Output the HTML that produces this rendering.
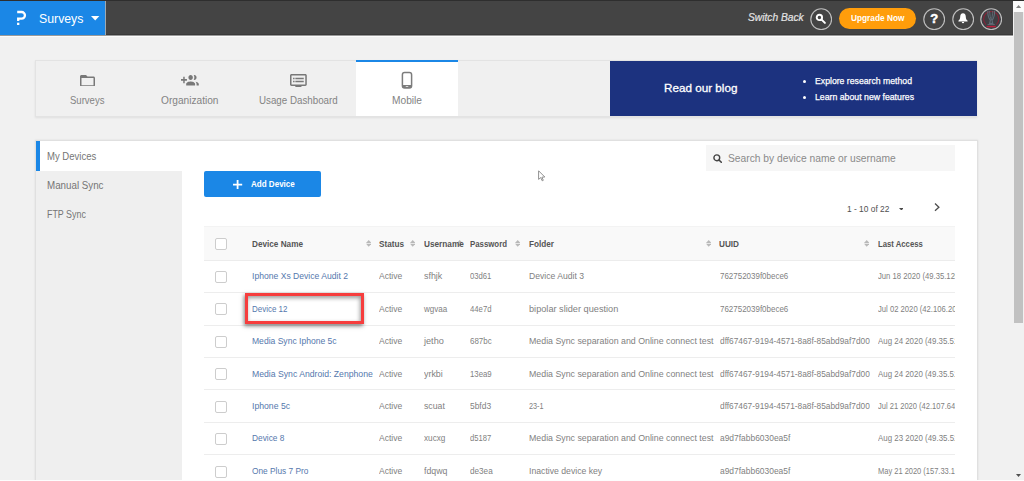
<!DOCTYPE html>
<html lang="en">
<head>
<meta charset="utf-8">
<title>Mobile - My Devices</title>
<style>
*{box-sizing:border-box;margin:0;padding:0}
html,body{width:1024px;height:481px;overflow:hidden}
body{position:relative;background:#f1f1f1;font-family:"Liberation Sans",sans-serif;}
.abs,.t,svg.i{position:absolute}
.t{white-space:nowrap;line-height:1;transform-origin:0 0;display:block}
#topline{left:0;top:0;width:1024px;height:1px;background:#2e2e2e}
#hdr{left:0;top:1px;width:1013px;height:34px;background:#444;border-bottom:1px solid #3a3a3a}
#hdrl1{left:0;top:35px;width:1013px;height:1px;background:#9a9a9a}
#hdrl2{left:0;top:36px;width:1013px;height:1px;background:#fcfcfc}
#brand{left:0;top:1px;width:106px;height:34px;background:#1b87e6;border-right:1px solid #9fa8b0}
.circ{width:22px;height:22px;border:1px solid #cfcfcf;border-radius:50%;top:8px}
#upg{left:839px;top:8px;width:77px;height:21px;border-radius:10.5px;background:#ff9d0b}
#sbar{left:1013px;top:1px;width:11px;height:480px;background:#f1f1f1}
#sthumb{left:1014px;top:12px;width:9px;height:310.5px;background:#c1c1c1}
#sbtn{left:1013px;top:1px;width:11px;height:11px;background:#fbfbfb}
#tabs{left:35px;top:60px;width:942px;height:57px;background:#f0f0f0;border:1px solid #e3e3e3;box-shadow:0 1px 2px rgba(0,0,0,.08)}
#tabact{left:356px;top:60px;width:102px;height:56px;background:#fff;border-top:2px solid #1b87e6}
#blog{left:610px;top:61px;width:366.6px;height:54.6px;background:#1c327f}
.dot{width:3.4px;height:3.4px;border-radius:50%;background:#fff}
#card{left:36px;top:141px;width:941px;height:345px;background:#fff;box-shadow:0 0 0 1px #e0e0e0,0 0 2px 1px rgba(0,0,0,.09)}
#botline{left:0;top:480px;width:1024px;height:1px;background:#fdfdfd}
#side{left:36px;top:171px;width:146px;height:311px;background:#efefef}
#sideact{left:36px;top:141px;width:4px;height:30px;background:#1b87e6}
#addbtn{left:204.2px;top:170.7px;width:116.8px;height:26.3px;border-radius:2px;background:#1b87e6}
#search{left:706px;top:145px;width:249px;height:26px;background:#f6f6f6}
#thead{left:204.2px;top:226px;width:750.6px;height:35px;background:#f9f9f9;border-bottom:1px solid #ececec;border-top:1px solid #f3f3f3}
.rl{left:204.2px;width:750.6px;height:1px;background:#ededed}
.cb{left:215.2px;width:12px;height:12px;border:1px solid #cdcdcd;border-radius:2px;background:#fff}
#clip{left:204px;top:261px;width:750.8px;height:220px;overflow:hidden}
#hl{left:245px;top:293px;width:119px;height:31px;border:3px solid #f63d3d;box-shadow:-1px 2px 4px rgba(0,0,0,.5),inset -1px 2px 4px rgba(0,0,0,.4)}
</style>
</head>
<body>
<div class="abs" id="hdr"></div>
<div class="abs" id="brand"></div>
<div class="abs" id="hdrl1"></div><div class="abs" id="hdrl2"></div>
<div class="abs" id="topline"></div>
<!-- logo -->
<svg class="i" style="left:16px;top:10px" width="11" height="16" viewBox="0 0 11 16"><path d="M1.2 2 H5.6 A3.3 3.3 0 0 1 5.6 8.7 H2.2 V11" fill="none" stroke="#fff" stroke-width="2.3" stroke-linejoin="miter"/><rect x="1.05" y="12.7" width="2.3" height="2.3" fill="#fff"/></svg>
<svg class="i" style="left:91.2px;top:16.2px" width="8.4" height="4.6" viewBox="0 0 8.4 4.6"><path d="M0 0H8.4L4.2 4.6Z" fill="#fff"/></svg>
<!-- header right icons -->
<svg class="i" style="left:809.7px;top:7.75px" width="22.4" height="22.4" viewBox="0 0 22.4 22.4"><circle cx="11.2" cy="11.2" r="10.4" fill="none" stroke="#bebebe" stroke-width="1.15"/></svg>
<svg class="i" style="left:815px;top:13px" width="12" height="12" viewBox="0 0 12 12"><circle cx="4.4" cy="4.4" r="2.7" fill="none" stroke="#fff" stroke-width="1.9"/><path d="M6.6 6.6L9.9 9.9" stroke="#fff" stroke-width="2" stroke-linecap="round"/></svg>
<div class="abs" id="upg"></div>
<svg class="i" style="left:922.7px;top:7.75px" width="22.4" height="22.4" viewBox="0 0 22.4 22.4"><circle cx="11.2" cy="11.2" r="10.4" fill="none" stroke="#bebebe" stroke-width="1.15"/></svg>
<span class="t" style="left:930.2px;top:12px;font-size:13px;font-weight:700;color:#fff;-webkit-text-stroke:0.5px #fff">?</span>
<svg class="i" style="left:951.5px;top:7.75px" width="22.4" height="22.4" viewBox="0 0 22.4 22.4"><circle cx="11.2" cy="11.2" r="10.4" fill="none" stroke="#bebebe" stroke-width="1.15"/></svg>
<svg class="i" style="left:957.7px;top:13.2px" width="10" height="11" viewBox="0 0 10 11"><path d="M5 0.3C6.9 0.3 7.8 1.9 7.8 3.8C7.8 5.8 8.5 6.9 9.6 7.8V8.6H0.4V7.8C1.5 6.9 2.2 5.8 2.2 3.8C2.2 1.9 3.1 0.3 5 0.3Z" fill="#fff"/><path d="M3.8 9.1H6.2A1.2 1.2 0 0 1 3.8 9.1Z" fill="#fff"/></svg>
<!-- avatar -->
<svg class="i" style="left:980.1px;top:7.75px" width="22.4" height="22.4" viewBox="0 0 22.4 22.4"><circle cx="11.2" cy="11.2" r="10.4" fill="#3e3e43" stroke="#bebebe" stroke-width="1.15"/><path d="M6 16.6A7.6 7.6 0 1 1 16.4 16.6" fill="none" stroke="#8a2236" stroke-width="1.1"/><path d="M7.9 2.6C7.6 7 8.9 10.6 10.4 12.4L9.6 15.4H12.8L12 12.4C13.5 10.6 14.8 7 14.5 2.6" fill="none" stroke="#5f6b76" stroke-width="1.1"/><path d="M9.6 3C9.8 7 10.4 10 11.2 12C12 10 12.6 7 12.8 3" fill="none" stroke="#5f6b76" stroke-width="0.9"/><path d="M7.6 16.6H14.8" stroke="#5f6b76" stroke-width="1"/><path d="M6.6 18.6H15.8" stroke="#c01f3c" stroke-width="1.4"/></svg>
<!-- scrollbar -->
<div class="abs" id="sbar"></div>
<div class="abs" id="sbtn"></div>
<div class="abs" id="sthumb"></div>
<svg class="i" style="left:1015.8px;top:5.2px" width="5.2" height="2.9" viewBox="0 0 5.2 2.9"><path d="M0 2.9L2.6 0L5.2 2.9Z" fill="#808080"/></svg>
<svg class="i" style="left:1016px;top:473.5px" width="5" height="3" viewBox="0 0 5 3"><path d="M0 0H5L2.5 3Z" fill="#505050"/></svg>
<!-- tabs -->
<div class="abs" id="tabs"></div>
<div class="abs" id="tabact"></div>
<svg class="i" style="left:79.5px;top:74.5px" width="15" height="11.8" viewBox="2 4 20 16" preserveAspectRatio="none"><path fill="#787878" d="M20 6h-8l-2-2H4c-1.1 0-1.99.9-1.99 2L2 18c0 1.1.9 2 2 2h16c1.1 0 2-.9 2-2V8c0-1.1-.9-2-2-2zm0 12H4V8h16v10z"/></svg>
<svg class="i" style="left:181px;top:75px" width="17.8" height="10.6" viewBox="0 5 24 13" preserveAspectRatio="none"><path fill="#787878" d="M8 10H5V7H3v3H0v2h3v3h2v-3h3v-2zm10 1c1.66 0 2.99-1.34 2.99-3S19.66 5 18 5c-.32 0-.63.05-.91.14.57.81.9 1.79.9 2.86s-.34 2.04-.9 2.86c.28.09.59.14.91.14zm-5 0c1.66 0 2.99-1.34 2.99-3S14.66 5 13 5c-1.66 0-3 1.34-3 3s1.34 3 3 3zm6.620 2.160c.83.73 1.380 1.660 1.380 2.840v2h3v-2c0-1.540-2.370-2.490-4.380-2.840zM13 13c-2 0-6 1-6 3v2h12v-2c0-2-4-3-6-3z"/></svg>
<svg class="i" style="left:290px;top:73.7px" width="16.8" height="13.4" viewBox="1 3 22 18" preserveAspectRatio="none"><path fill="#787878" d="M21 3H3c-1.1 0-2 .9-2 2v12c0 1.1.9 2 2 2h5v2h8v-2h5c1.1 0 1.990-.9 1.990-2L23 5c0-1.1-.9-2-2-2zm0 14H3V5h18v12zm-2-9H8v2h11V8zm0 4H8v2h11v-2zM7 8H5v2h2V8zm0 4H5v2h2v-2z"/></svg>
<svg class="i" style="left:401px;top:71px;overflow:visible" width="12" height="18" viewBox="0 0 12 18"><rect x="1.4" y="1.5" width="9.2" height="15.4" rx="2.2" fill="none" stroke="#7c7c7c" stroke-width="1.5"/><path d="M1.4 14H10.6V15.2Q10.6 16.9 8.6 16.9H3.4Q1.4 16.9 1.4 15.2Z" fill="#7c7c7c"/><rect x="4.65" y="14.9" width="2.7" height="1" rx="0.5" fill="#d8d8d8"/></svg>
<!-- blog -->
<div class="abs" id="blog"></div>
<div class="abs dot" style="left:802.9px;top:79.5px"></div>
<div class="abs dot" style="left:802.9px;top:95.5px"></div>
<!-- card -->
<div class="abs" id="card"></div>
<div class="abs" id="side"></div>
<div class="abs" id="sideact"></div>
<div class="abs" id="addbtn"></div>
<svg class="i" style="left:233.4px;top:180px" width="9.2" height="9.2" viewBox="0 0 9.2 9.2"><path d="M4.6 0V9.2M0 4.6H9.2" stroke="#fff" stroke-width="1.8"/></svg>
<div class="abs" id="search"></div>
<svg class="i" style="left:712.8px;top:153.8px" width="9" height="9" viewBox="0 0 9 9"><circle cx="3.8" cy="3.8" r="2.9" fill="none" stroke="#444" stroke-width="1.4"/><path d="M6.0 6.0L8.3 8.3" stroke="#444" stroke-width="1.6" stroke-linecap="round"/></svg>
<svg class="i" style="left:898.6px;top:207.6px" width="4.8" height="2.6" viewBox="0 0 4.8 2.6"><path d="M0 0H4.800L2.4 2.6Z" fill="#4a4a4a"/></svg>
<svg class="i" style="left:934px;top:203.2px" width="6.4" height="8.4" viewBox="0 0 6.4 8.4"><path d="M1 0.6L4.900 4.200L1 7.800" fill="none" stroke="#4d4d4d" stroke-width="1.3"/></svg>
<!-- cursor -->
<svg class="i" style="left:538px;top:169.5px" width="8" height="12" viewBox="0 0 8 12"><path d="M0.6 0.8V9.4L2.7 7.6L4.2 10.8L5.3 10.3L3.9 7.2L6.8 7Z" fill="#fff" stroke="#858585" stroke-width="0.9" stroke-linejoin="round"/></svg>
<!-- table -->
<div class="abs" id="thead"></div>
<div class="abs cb" style="top:237.7px"></div>
<svg class="i" style="left:365.8px;top:239.8px" width="5.4" height="6.8" viewBox="0 0 5.4 6.8"><path d="M0 3L2.7 0L5.4 3Z" fill="#b9b9b9"/><path d="M0 3.8L2.7 6.8L5.4 3.8Z" fill="#b9b9b9"/></svg>
<svg class="i" style="left:409.9px;top:239.8px" width="5.4" height="6.8" viewBox="0 0 5.4 6.8"><path d="M0 3L2.7 0L5.4 3Z" fill="#b9b9b9"/><path d="M0 3.8L2.7 6.8L5.4 3.8Z" fill="#b9b9b9"/></svg>
<svg class="i" style="left:457.1px;top:239.8px" width="5.4" height="6.8" viewBox="0 0 5.4 6.8"><path d="M0 3L2.7 0L5.4 3Z" fill="#b9b9b9"/><path d="M0 3.8L2.7 6.8L5.4 3.8Z" fill="#b9b9b9"/></svg>
<svg class="i" style="left:514.8px;top:239.8px" width="5.4" height="6.8" viewBox="0 0 5.4 6.8"><path d="M0 3L2.7 0L5.4 3Z" fill="#b9b9b9"/><path d="M0 3.8L2.7 6.8L5.4 3.8Z" fill="#b9b9b9"/></svg>
<svg class="i" style="left:705.6px;top:239.8px" width="5.4" height="6.8" viewBox="0 0 5.4 6.8"><path d="M0 3L2.7 0L5.4 3Z" fill="#b9b9b9"/><path d="M0 3.8L2.7 6.8L5.4 3.8Z" fill="#b9b9b9"/></svg>
<svg class="i" style="left:863.9px;top:239.8px" width="5.4" height="6.8" viewBox="0 0 5.4 6.8"><path d="M0 3L2.7 0L5.4 3Z" fill="#b9b9b9"/><path d="M0 3.8L2.7 6.8L5.4 3.8Z" fill="#b9b9b9"/></svg>


<div class="abs rl" style="top:292px"></div>
<div class="abs rl" style="top:325px"></div>
<div class="abs rl" style="top:357px"></div>
<div class="abs rl" style="top:389px"></div>
<div class="abs rl" style="top:422px"></div>
<div class="abs rl" style="top:454px"></div>
<div class="abs rl" style="top:487px"></div>
<div class="abs cb" style="top:271.0px"></div>
<div class="abs cb" style="top:303.4px"></div>
<div class="abs cb" style="top:335.8px"></div>
<div class="abs cb" style="top:368.3px"></div>
<div class="abs cb" style="top:400.7px"></div>
<div class="abs cb" style="top:433.1px"></div>
<div class="abs cb" style="top:465.5px"></div>
<span class="t" style="left:39.4px;top:13px;font-size:12.7px;color:#fff;transform:scaleX(0.969);">Surveys</span>
<span class="t" style="left:748.1px;top:12px;font-size:11.4px;color:#e4e4e4;transform:scaleX(0.896);font-style:italic;-webkit-text-stroke:0.2px #e4e4e4;">Switch Back</span>
<span class="t" style="left:850.6px;top:13px;font-size:9.8px;color:#fff;transform:scaleX(0.846);font-weight:700;">Upgrade Now</span>
<span class="t" style="left:70.0px;top:95px;font-size:10.5px;color:#838383;transform:scaleX(0.909);">Surveys</span>
<span class="t" style="left:160.8px;top:95px;font-size:10.5px;color:#838383;transform:scaleX(0.966);">Organization</span>
<span class="t" style="left:258.8px;top:95px;font-size:10.5px;color:#838383;transform:scaleX(0.930);">Usage Dashboard</span>
<span class="t" style="left:392.0px;top:95px;font-size:10.5px;color:#838383;transform:scaleX(0.970);">Mobile</span>
<span class="t" style="left:664.4px;top:83px;font-size:11.5px;color:#fff;transform:scaleX(1.016);-webkit-text-stroke:0.3px #fff;">Read our blog</span>
<span class="t" style="left:814.5px;top:76px;font-size:9.5px;color:#fff;transform:scaleX(0.914);-webkit-text-stroke:0.25px #fff;">Explore research method</span>
<span class="t" style="left:814.5px;top:92px;font-size:9.5px;color:#fff;transform:scaleX(0.919);-webkit-text-stroke:0.25px #fff;">Learn about new features</span>
<span class="t" style="left:47.4px;top:151px;font-size:10.5px;color:#757575;transform:scaleX(0.907);">My Devices</span>
<span class="t" style="left:47.4px;top:180px;font-size:10.5px;color:#757575;transform:scaleX(0.931);">Manual Sync</span>
<span class="t" style="left:47.4px;top:209px;font-size:10.5px;color:#757575;transform:scaleX(0.847);">FTP Sync</span>
<span class="t" style="left:251.3px;top:179px;font-size:9.9px;color:#fff;transform:scaleX(0.814);font-weight:700;">Add Device</span>
<span class="t" style="left:727.5px;top:153px;font-size:11.3px;color:#8a8a8a;transform:scaleX(0.908);">Search by device name or username</span>
<span class="t" style="left:846.8px;top:204px;font-size:9.5px;color:#505050;transform:scaleX(0.882);">1 - 10 of 22</span>
<span class="t" style="left:251.7px;top:239px;font-size:9.5px;color:#555;transform:scaleX(0.862);font-weight:700;">Device Name</span>
<span class="t" style="left:379.0px;top:239px;font-size:9.5px;color:#555;transform:scaleX(0.861);font-weight:700;">Status</span>
<span class="t" style="left:423.5px;top:239px;font-size:9.5px;color:#555;transform:scaleX(0.866);font-weight:700;">Username</span>
<span class="t" style="left:470.0px;top:239px;font-size:9.5px;color:#555;transform:scaleX(0.824);font-weight:700;">Password</span>
<span class="t" style="left:528.7px;top:239px;font-size:9.5px;color:#555;transform:scaleX(0.861);font-weight:700;">Folder</span>
<span class="t" style="left:719.3px;top:239px;font-size:9.5px;color:#555;transform:scaleX(0.861);font-weight:700;">UUID</span>
<span class="t" style="left:878.1px;top:239px;font-size:9.5px;color:#555;transform:scaleX(0.813);font-weight:700;">Last Access</span>
<div class="abs" id="clip" style="left:0;top:0;width:954.8px;height:481px">
<span class="t" style="left:251.7px;top:271px;font-size:9.5px;color:#5578ad;transform:scaleX(0.904);">Iphone Xs Device Audit 2</span>
<span class="t" style="left:379.0px;top:271px;font-size:9.5px;color:#7f7f7f;transform:scaleX(0.900);">Active</span>
<span class="t" style="left:423.5px;top:271px;font-size:9.5px;color:#7f7f7f;transform:scaleX(0.936);">sfhjk</span>
<span class="t" style="left:470.0px;top:271px;font-size:9.5px;color:#7f7f7f;transform:scaleX(0.810);">03d61</span>
<span class="t" style="left:528.7px;top:271px;font-size:9.5px;color:#7f7f7f;transform:scaleX(0.906);">Device Audit 3</span>
<span class="t" style="left:719.6px;top:271px;font-size:9.5px;color:#7f7f7f;transform:scaleX(0.839);">762752039f0bece6</span>
<span class="t" style="left:877.8px;top:271px;font-size:9.5px;color:#7f7f7f;transform:scaleX(0.809);">Jun 18 2020 (49.35.120.11)</span>
<span class="t" style="left:251.7px;top:304px;font-size:9.5px;color:#5578ad;transform:scaleX(0.838);">Device 12</span>
<span class="t" style="left:379.0px;top:304px;font-size:9.5px;color:#7f7f7f;transform:scaleX(0.900);">Active</span>
<span class="t" style="left:423.5px;top:304px;font-size:9.5px;color:#7f7f7f;transform:scaleX(0.848);">wgvaa</span>
<span class="t" style="left:470.0px;top:304px;font-size:9.5px;color:#7f7f7f;transform:scaleX(0.814);">44e7d</span>
<span class="t" style="left:528.7px;top:304px;font-size:9.5px;color:#7f7f7f;transform:scaleX(0.966);">bipolar slider question</span>
<span class="t" style="left:719.6px;top:304px;font-size:9.5px;color:#7f7f7f;transform:scaleX(0.839);">762752039f0bece6</span>
<span class="t" style="left:877.8px;top:304px;font-size:9.5px;color:#7f7f7f;transform:scaleX(0.807);">Jul 02 2020 (42.106.20.14)</span>
<span class="t" style="left:251.7px;top:336px;font-size:9.5px;color:#5578ad;transform:scaleX(0.900);">Media Sync Iphone 5c</span>
<span class="t" style="left:379.0px;top:336px;font-size:9.5px;color:#7f7f7f;transform:scaleX(0.900);">Active</span>
<span class="t" style="left:423.5px;top:336px;font-size:9.5px;color:#7f7f7f;transform:scaleX(0.961);">jetho</span>
<span class="t" style="left:470.0px;top:336px;font-size:9.5px;color:#7f7f7f;transform:scaleX(0.838);">687bc</span>
<span class="t" style="left:528.7px;top:336px;font-size:9.5px;color:#7f7f7f;transform:scaleX(0.927);">Media Sync separation and Online connect test</span>
<span class="t" style="left:719.6px;top:336px;font-size:9.5px;color:#7f7f7f;transform:scaleX(0.876);">dff67467-9194-4571-8a8f-85abd9af7d00</span>
<span class="t" style="left:877.8px;top:336px;font-size:9.5px;color:#7f7f7f;transform:scaleX(0.831);">Aug 24 2020 (49.35.51.10)</span>
<span class="t" style="left:251.7px;top:369px;font-size:9.5px;color:#5578ad;transform:scaleX(0.911);">Media Sync Android: Zenphone</span>
<span class="t" style="left:379.0px;top:369px;font-size:9.5px;color:#7f7f7f;transform:scaleX(0.900);">Active</span>
<span class="t" style="left:423.5px;top:369px;font-size:9.5px;color:#7f7f7f;transform:scaleX(0.937);">yrkbi</span>
<span class="t" style="left:470.0px;top:369px;font-size:9.5px;color:#7f7f7f;transform:scaleX(0.821);">13ea9</span>
<span class="t" style="left:528.7px;top:369px;font-size:9.5px;color:#7f7f7f;transform:scaleX(0.927);">Media Sync separation and Online connect test</span>
<span class="t" style="left:719.6px;top:369px;font-size:9.5px;color:#7f7f7f;transform:scaleX(0.876);">dff67467-9194-4571-8a8f-85abd9af7d00</span>
<span class="t" style="left:877.8px;top:369px;font-size:9.5px;color:#7f7f7f;transform:scaleX(0.831);">Aug 24 2020 (49.35.51.10)</span>
<span class="t" style="left:251.7px;top:401px;font-size:9.5px;color:#5578ad;transform:scaleX(0.911);">Iphone 5c</span>
<span class="t" style="left:379.0px;top:401px;font-size:9.5px;color:#7f7f7f;transform:scaleX(0.900);">Active</span>
<span class="t" style="left:423.5px;top:401px;font-size:9.5px;color:#7f7f7f;transform:scaleX(0.916);">scuat</span>
<span class="t" style="left:470.0px;top:401px;font-size:9.5px;color:#7f7f7f;transform:scaleX(0.887);">5bfd3</span>
<span class="t" style="left:528.7px;top:401px;font-size:9.5px;color:#7f7f7f;transform:scaleX(0.768);">23-1</span>
<span class="t" style="left:719.6px;top:401px;font-size:9.5px;color:#7f7f7f;transform:scaleX(0.876);">dff67467-9194-4571-8a8f-85abd9af7d00</span>
<span class="t" style="left:877.8px;top:401px;font-size:9.5px;color:#7f7f7f;transform:scaleX(0.794);">Jul 21 2020 (42.107.64.12)</span>
<span class="t" style="left:251.7px;top:433px;font-size:9.5px;color:#5578ad;transform:scaleX(0.876);">Device 8</span>
<span class="t" style="left:379.0px;top:433px;font-size:9.5px;color:#7f7f7f;transform:scaleX(0.900);">Active</span>
<span class="t" style="left:423.5px;top:433px;font-size:9.5px;color:#7f7f7f;transform:scaleX(0.862);">xucxg</span>
<span class="t" style="left:470.0px;top:433px;font-size:9.5px;color:#7f7f7f;transform:scaleX(0.799);">d5187</span>
<span class="t" style="left:528.7px;top:433px;font-size:9.5px;color:#7f7f7f;transform:scaleX(0.927);">Media Sync separation and Online connect test</span>
<span class="t" style="left:719.6px;top:433px;font-size:9.5px;color:#7f7f7f;transform:scaleX(0.887);">a9d7fabb6030ea5f</span>
<span class="t" style="left:877.8px;top:433px;font-size:9.5px;color:#7f7f7f;transform:scaleX(0.832);">Aug 23 2020 (49.35.51.10)</span>
<span class="t" style="left:251.7px;top:466px;font-size:9.5px;color:#5578ad;transform:scaleX(0.875);">One Plus 7 Pro</span>
<span class="t" style="left:379.0px;top:466px;font-size:9.5px;color:#7f7f7f;transform:scaleX(0.900);">Active</span>
<span class="t" style="left:423.5px;top:466px;font-size:9.5px;color:#7f7f7f;transform:scaleX(0.923);">fdqwq</span>
<span class="t" style="left:470.0px;top:466px;font-size:9.5px;color:#7f7f7f;transform:scaleX(0.859);">de3ea</span>
<span class="t" style="left:528.7px;top:466px;font-size:9.5px;color:#7f7f7f;transform:scaleX(0.912);">Inactive device key</span>
<span class="t" style="left:719.6px;top:466px;font-size:9.5px;color:#7f7f7f;transform:scaleX(0.887);">a9d7fabb6030ea5f</span>
<span class="t" style="left:877.8px;top:466px;font-size:9.5px;color:#7f7f7f;transform:scaleX(0.788);">May 21 2020 (157.33.10.1)</span>

</div>
<div class="abs" id="hl"></div>
<div class="abs" id="botline"></div>
</body>
</html>
